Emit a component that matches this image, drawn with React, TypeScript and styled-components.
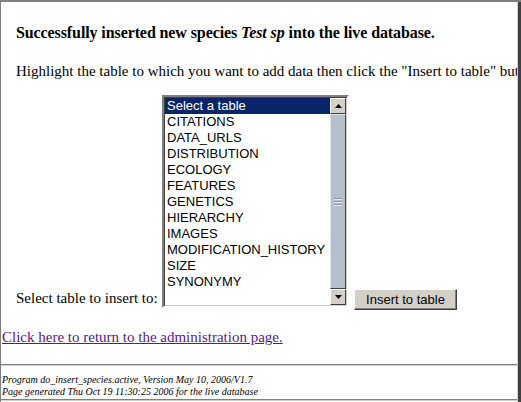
import React from 'react'
import styled, { createGlobalStyle } from 'styled-components'

const GlobalStyle = createGlobalStyle`
  html, body {
    margin: 0;
    padding: 0;
    background: #ffffff;
  }
`

const Frame = styled.div`
  width: 521px;
  height: 402px;
  box-sizing: border-box;
  border-top: 2px solid #808080;
  border-left: 1px solid #808080;
  box-shadow: inset -3px 0 0 #404040, inset -4px 0 0 #d4d0c8;
  background: #ffffff;
  overflow: hidden;
  font-family: "Liberation Serif", "Times New Roman", serif;
  color: #000;
`

const Content = styled.div`
  width: 516px;
  overflow: hidden;
`

const Main = styled.div`
  padding-left: 15px;
`

const Heading = styled.h3`
  margin: 22px 0 0;
  font-size: 16px;
  font-weight: bold;
  line-height: 18px;
  white-space: nowrap;
  letter-spacing: -0.1px;

  em {
    font-style: italic;
  }
`

const Intro = styled.p`
  margin: 20px 0 0;
  font-size: 15px;
  line-height: 18px;
  white-space: nowrap;
`

const FormRow = styled.form`
  display: flex;
  align-items: flex-end;
  margin-top: 15px;
`

const Label = styled.span`
  width: 146px;
  font-size: 15px;
  line-height: 18px;
  padding-bottom: 1px;
  white-space: nowrap;
`

const ListBox = styled.div`
  width: 187px;
  height: 213px;
  box-sizing: border-box;
  border: 2px solid;
  border-color: #808080 #ffffff #ffffff #808080;
  box-shadow: inset 1px 1px 0 #404040, inset -1px -1px 0 #d4d0c8;
  display: flex;
  padding: 0 1px 1px 0;
  background: #fff;
`

const Items = styled.div`
  flex: 1;
  padding-top: 1px;
  padding-left: 1px;
  font-family: "Liberation Sans", Arial, sans-serif;
  font-size: 13px;
`

const Item = styled.div<{ $selected?: boolean }>`
  height: 16px;
  line-height: 16px;
  padding-left: 2px;
  white-space: nowrap;
  background: ${p => (p.$selected ? '#0a246a' : 'transparent')};
  color: ${p => (p.$selected ? '#ffffff' : '#000000')};
`

const ScrollBar = styled.div`
  width: 16px;
  display: flex;
  flex-direction: column;
  margin-top: 1px;
`

const ArrowButton = styled.div`
  width: 16px;
  height: 16px;
  box-sizing: border-box;
  background: #d4d0c8;
  border: 1px solid;
  border-color: #ffffff #404040 #404040 #ffffff;
  display: flex;
  align-items: center;
  justify-content: center;
`

const Thumb = styled.div`
  flex: 1;
  box-sizing: border-box;
  background: #b6bfcc;
  border: 1px solid;
  border-color: #e4e8ee #404040 #404040 #e4e8ee;
  display: flex;
  flex-direction: column;
  align-items: center;
  justify-content: center;
  gap: 2px;
`

const Grip = styled.div`
  width: 8px;
  height: 1px;
  background: #8a94a2;
  box-shadow: 0 1px 0 #e8ecf0;
`

const InsertButton = styled.button`
  margin-left: 5px;
  margin-bottom: -2px;
  width: 103px;
  height: 21px;
  padding: 0;
  box-sizing: border-box;
  background: #d4d0c8;
  border: 1px solid;
  border-color: #ffffff #404040 #404040 #ffffff;
  box-shadow: inset -1px -1px 0 #808080;
  font-family: "Liberation Sans", Arial, sans-serif;
  font-size: 13px;
  color: #000;
`

const BackLink = styled.a`
  display: inline-block;
  margin: 20px 0 0 1px;
  font-size: 15px;
  line-height: 18px;
  color: #551a8b;
  text-decoration: underline;
`

const Spacer = styled.div`
  height: 18px;
`

const Rule = styled.hr`
  margin: 0;
  height: 0;
  border: none;
  border-top: 1px solid #808080;
  border-bottom: 1px solid #d4d0c8;
`

const Footer = styled.div`
  padding: 8px 0 1px 1px;
  font-size: 10px;
  line-height: 12px;
  font-style: italic;
  white-space: nowrap;
`

const tables = [
  'Select a table',
  'CITATIONS',
  'DATA_URLS',
  'DISTRIBUTION',
  'ECOLOGY',
  'FEATURES',
  'GENETICS',
  'HIERARCHY',
  'IMAGES',
  'MODIFICATION_HISTORY',
  'SIZE',
  'SYNONYMY',
]

const Arrow = ({ up }: { up?: boolean }) => (
  <svg width="7" height="4" viewBox="0 0 7 4">
    <path d={up ? 'M3.5 0 L7 4 L0 4 Z' : 'M0 0 L7 0 L3.5 4 Z'} fill="#000" />
  </svg>
)

export default function App() {
  return (
    <>
      <GlobalStyle />
      <Frame>
        <Content>
          <Main>
            <Heading>
              Successfully inserted new species <em>Test sp</em> into the live database.
            </Heading>
            <Intro>
              Highlight the table to which you want to add data then click the "Insert to table" button.
            </Intro>
            <FormRow onSubmit={e => e.preventDefault()}>
              <Label>Select table to insert to:</Label>
              <ListBox>
                <Items>
                  {tables.map((t, i) => (
                    <Item key={t} $selected={i === 0}>{t}</Item>
                  ))}
                </Items>
                <ScrollBar>
                  <ArrowButton><Arrow up /></ArrowButton>
                  <Thumb>
                    <Grip />
                    <Grip />
                    <Grip />
                  </Thumb>
                  <ArrowButton><Arrow /></ArrowButton>
                </ScrollBar>
              </ListBox>
              <InsertButton type="submit">Insert to table</InsertButton>
            </FormRow>
          </Main>
          <BackLink href="#">Click here to return to the administration page.</BackLink>
          <Spacer />
          <Rule />
          <Footer>
            Program do_insert_species.active, Version May 10, 2006/V1.7
            <br />
            Page generated Thu Oct 19 11:30:25 2006 for the live database
          </Footer>
          <Rule />
        </Content>
      </Frame>
    </>
  )
}
